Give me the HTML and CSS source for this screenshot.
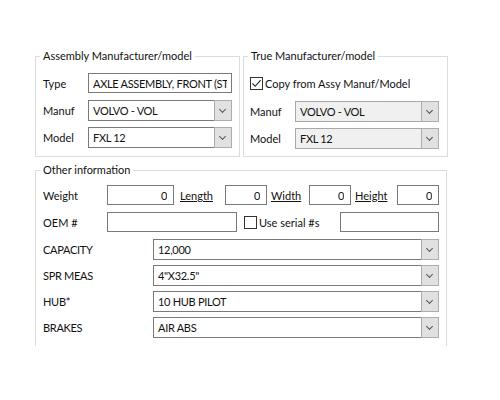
FILE: index.html
```html
<!DOCTYPE html>
<html lang="en">

<head>
    <meta charset="UTF-8">
    <title>Part Details</title>
    <link rel="stylesheet" href="styles.css">
</head>

<body>
    <div class="form">
        <div class="top-row">
            <fieldset class="group assy">
                <legend>Assembly Manufacturer/model</legend>
                <div class="row">
                    <span class="label">Type</span>
                    <input class="field wide" type="text" value="AXLE ASSEMBLY, FRONT (STEER)" readonly>
                </div>
                <div class="row">
                    <span class="label">Manuf</span>
                    <div class="combo wide"><span class="combo-text">VOLVO - VOL</span><span class="combo-btn"></span></div>
                </div>
                <div class="row">
                    <span class="label">Model</span>
                    <div class="combo wide"><span class="combo-text">FXL 12</span><span class="combo-btn"></span></div>
                </div>
            </fieldset>

            <fieldset class="group true">
                <legend>True Manufacturer/model</legend>
                <label class="check-row">
                    <span class="check checked">
                        <svg width="11" height="11" viewBox="0 0 11 11"><path d="M1.5 5.5 L4.2 8.3 L9.6 2.2" fill="none" stroke="#222" stroke-width="1.1"/></svg>
                    </span>
                    Copy from Assy Manuf/Model
                </label>
                <div class="row">
                    <span class="label">Manuf</span>
                    <div class="combo wide disabled"><span class="combo-text">VOLVO - VOL</span><span class="combo-btn"></span></div>
                </div>
                <div class="row">
                    <span class="label">Model</span>
                    <div class="combo wide disabled"><span class="combo-text">FXL 12</span><span class="combo-btn"></span></div>
                </div>
            </fieldset>
        </div>

        <fieldset class="group other">
            <legend>Other information</legend>
            <div class="row">
                <span class="label short">Weight</span>
                <input class="field num weight" type="text" value="0" readonly>
                <a class="link len" href="#">Length</a>
                <input class="field num dim" type="text" value="0" readonly>
                <a class="link wid" href="#">Width</a>
                <input class="field num dim" type="text" value="0" readonly>
                <a class="link hgt" href="#">Height</a>
                <input class="field num dim" type="text" value="0" readonly>
            </div>
            <div class="row">
                <span class="label short">OEM #</span>
                <input class="field oem" type="text" value="" readonly>
                <label class="check-inline">
                    <span class="check"></span>
                    Use serial #s
                </label>
                <input class="field serial" type="text" value="" readonly>
            </div>
            <div class="row attr-row">
                <span class="label long">CAPACITY</span>
                <div class="combo attr"><span class="combo-text">12,000</span><span class="combo-btn"></span></div>
            </div>
            <div class="row attr-row">
                <span class="label long">SPR MEAS</span>
                <div class="combo attr"><span class="combo-text">4"X32.5"</span><span class="combo-btn"></span></div>
            </div>
            <div class="row attr-row">
                <span class="label long">HUB*</span>
                <div class="combo attr"><span class="combo-text">10 HUB PILOT</span><span class="combo-btn"></span></div>
            </div>
            <div class="row attr-row">
                <span class="label long">BRAKES</span>
                <div class="combo attr"><span class="combo-text">AIR ABS</span><span class="combo-btn"></span></div>
            </div>
        </fieldset>
    </div>
</body>

</html>
```

FILE: styles.css
```css
body {
    margin: 0;
    background-color: #fff;
    font-family: Lato, "Liberation Sans", sans-serif;
    font-size: 11px;
    color: #111;
}

.form {
    padding: 49px 0 0 35px;
    width: 412px;
}

.top-row {
    display: flex;
    gap: 3px;
}

.group {
    margin: 0;
    border: 1px solid #dcdcdc;
    padding: 0 8px 0 7px;
}

.group legend {
    padding: 0 3px;
    margin-left: -3px;
    line-height: 14px;
}

.assy {
    width: 205px;
    box-sizing: border-box;
    padding: 10px 7px 8px 7px;
}

.true {
    width: 204px;
    box-sizing: border-box;
    padding: 13px 8px 8px 6px;
}

.true legend {
    margin-left: -2px;
}

.other {
    margin-top: 6px;
    box-sizing: border-box;
    height: 183px;
    border-bottom: none;
    padding: 8px 7px 0 7px;
}

.row {
    display: flex;
    align-items: center;
    height: 20px;
    margin-bottom: 7px;
}

.attr-row {
    margin-top: 1px;
    margin-bottom: 6px;
}

.assy .row:last-child,
.true .row:last-child {
    margin-bottom: 0;
}

.label {
    width: 45px;
    flex: none;
}

.label.short {
    width: 64px;
}

/* upper-case attribute names run a touch tighter */
.label.long {
    width: 110px;
    letter-spacing: -0.3px;
}

.field {
    box-sizing: border-box;
    height: 20px;
    border: 1px solid #7a7a7a;
    padding: 0 4px;
    font: inherit;
    letter-spacing: -0.3px;
    color: #111;
    background: #fff;
    outline: none;
    flex: none;
}

.field.num {
    text-align: right;
    padding-right: 6px;
}

.wide {
    width: 144px;
}

.weight {
    width: 67px;
}

.dim {
    width: 42px;
}

.oem {
    width: 130px;
}

.serial {
    width: 99px;
}

.link {
    color: #111;
    text-decoration: underline;
    flex: none;
}

.len {
    margin-left: 6px;
    width: 45px;
}

.wid,
.hgt {
    margin-left: 4px;
}

.wid {
    width: 38px;
}

.hgt {
    width: 42px;
}

.check-row,
.check-inline {
    display: flex;
    align-items: center;
    gap: 2px;
}

.check-row {
    height: 14px;
    margin-bottom: 11px;
}

.check-inline {
    margin-left: 7px;
    width: 96px;
}

.check {
    box-sizing: border-box;
    width: 13px;
    height: 13px;
    border: 1px solid #333;
    background: #fff;
    display: flex;
    align-items: center;
    justify-content: center;
}

.combo {
    box-sizing: border-box;
    height: 21px;
    border: 1px solid #7a7a7a;
    background: #fff;
    display: flex;
    flex: none;
}

.combo.disabled {
    background: #f0f0f0;
    border-color: #a8a8a8;
}

.combo.attr {
    width: 286px;
}

.combo-text {
    flex: 1;
    padding-left: 4px;
    line-height: 19px;
    letter-spacing: -0.3px;
    white-space: nowrap;
    overflow: hidden;
}

.combo-btn {
    width: 16px;
    margin: -1px -1px -1px 0;
    border: 1px solid #adadad;
    background: #e1e1e1;
    position: relative;
}

.combo-btn::after {
    content: "";
    position: absolute;
    left: 5px;
    top: 6px;
    width: 4px;
    height: 4px;
    border-right: 1px solid #555;
    border-bottom: 1px solid #555;
    transform: rotate(45deg);
}
```
